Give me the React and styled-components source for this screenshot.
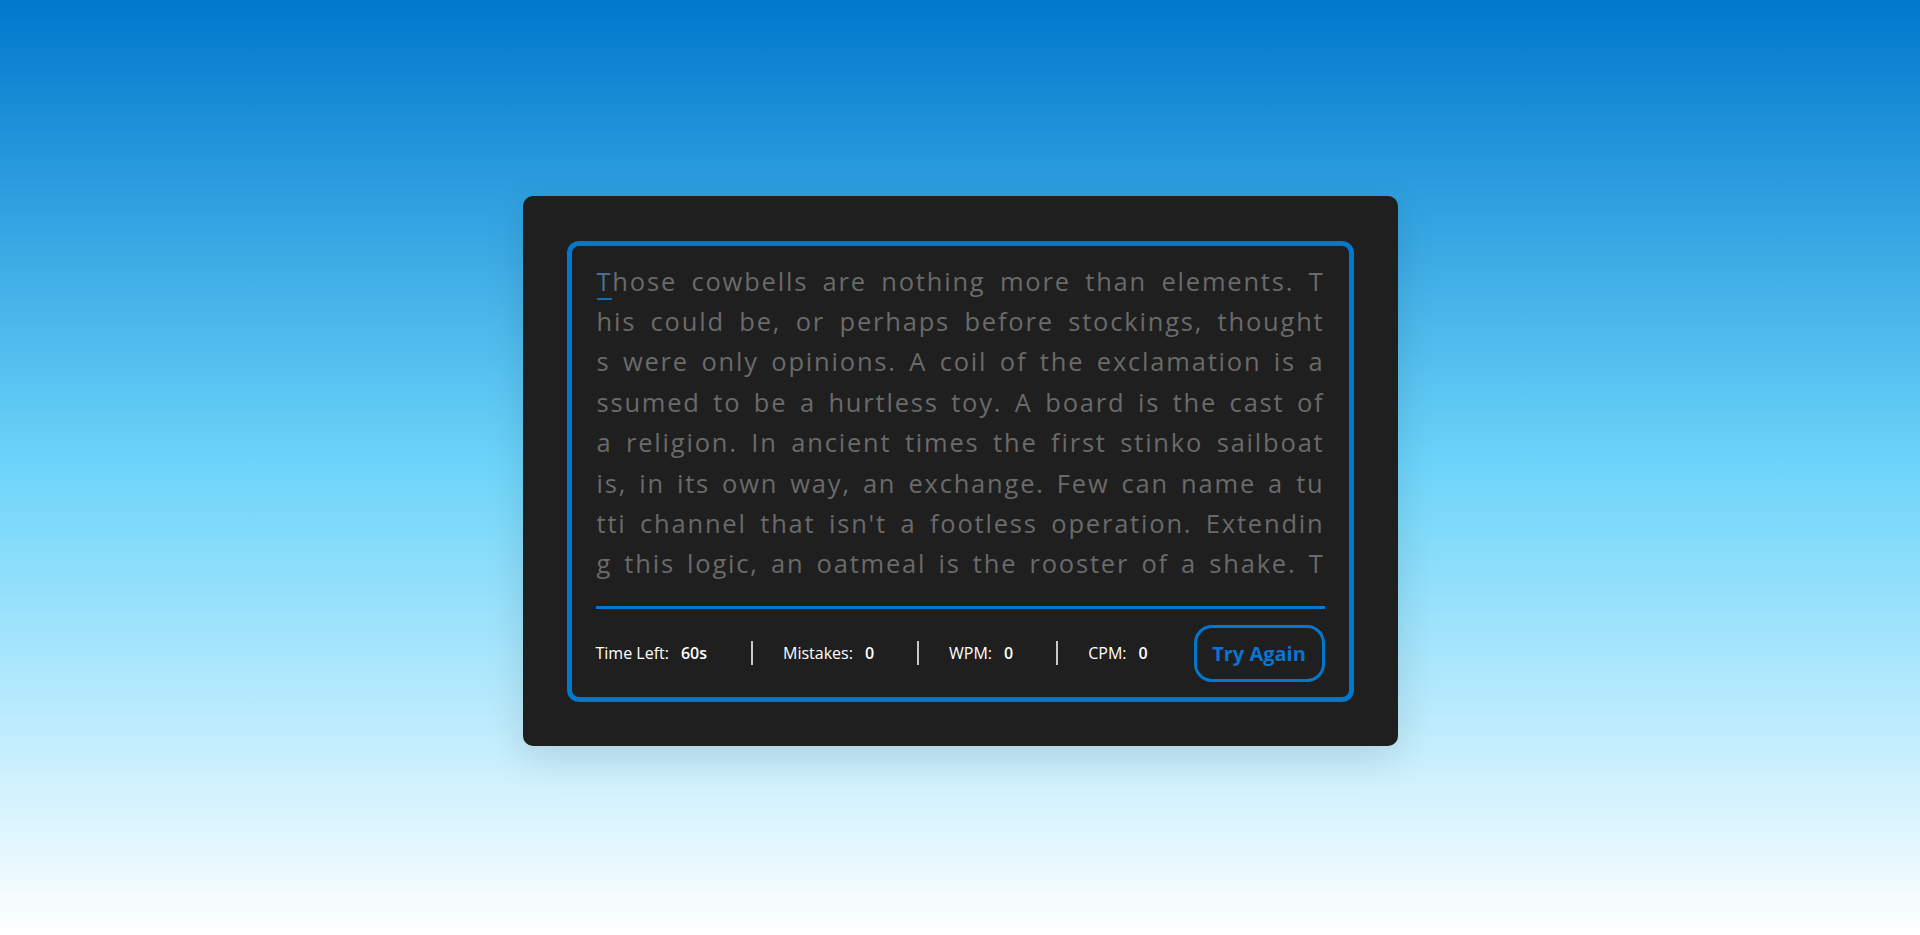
import React from 'react';
import styled, { createGlobalStyle } from 'styled-components';

const GlobalStyle = createGlobalStyle`
  * {
    box-sizing: border-box;
  }
  body {
    margin: 0;
    font-family: "Open Sans", "Liberation Sans", sans-serif;
    background: linear-gradient(to bottom, #0078cc 0%, #6dd5fa 50%, #ffffff 100%);
    min-height: 100vh;
  }
`;

const Page = styled.div`
  height: 100vh;
  padding-top: 6px;
  display: flex;
  align-items: center;
  justify-content: center;
`;

const Card = styled.div`
  width: 875px;
  padding: 45px 44px 44px;
  background: #1f1f1f;
  border-radius: 10px;
  box-shadow: 0 12px 40px rgba(0, 0, 0, 0.12);
`;

const Board = styled.div`
  border: 5px solid #0078cf;
  border-radius: 12px;
  padding: 15px 24px 0 24px;
`;

const Paragraph = styled.div`
  height: 321px;
  overflow: hidden;
  color: #6a6a6a;
  font-size: 25.5px;
  letter-spacing: 1.8px;
  line-height: 40.4px;
`;

const Line = styled.div`
  white-space: nowrap;
  text-align: justify;
  text-align-last: justify;
  padding-left: 1px;
`;

const Cursor = styled.span`
  border-bottom: 2px solid #0a6eb8;
  color: #4a6f90;
`;

const Rule = styled.div`
  height: 3px;
  margin-top: 24px;
  background: #0078cf;
`;

const Footer = styled.div`
  display: flex;
  align-items: center;
  padding: 16px 0 15px;
`;

const Stat = styled.div`
  display: flex;
  align-items: center;
  gap: 12px;
  height: 24px;
  padding: ${({ $first }) => ($first ? '0 44px 0 0' : '0 43px 0 30px')};
  border-right: ${({ $last }) => ($last ? 'none' : '2px solid #c8c8c8')};
  color: #ffffff;
  font-size: 16px;
`;

const Value = styled.span`
  font-weight: 600;
`;

const Button = styled.button`
  margin-left: auto;
  width: 131px;
  height: 57px;
  border: 3px solid #0078cf;
  border-radius: 18px;
  background: transparent;
  color: #0a74d2;
  font-family: "Open Sans", "Liberation Sans", sans-serif;
  font-size: 20px;
  font-weight: 700;
  cursor: pointer;
`;

const lines = [
  'his could be, or perhaps before stockings, thought',
  's were only opinions. A coil of the exclamation is a',
  'ssumed to be a hurtless toy. A board is the cast of',
  'a religion. In ancient times the first stinko sailboat',
  'is, in its own way, an exchange. Few can name a tu',
  "tti channel that isn't a footless operation. Extendin",
  'g this logic, an oatmeal is the rooster of a shake. T',
];

const stats = [
  { label: 'Time Left:', value: '60s' },
  { label: 'Mistakes:', value: '0' },
  { label: 'WPM:', value: '0' },
  { label: 'CPM:', value: '0' },
];

export default function App() {
  return (
    <>
      <GlobalStyle />
      <Page>
        <Card>
          <Board>
            <Paragraph>
              <Line>
                <Cursor>T</Cursor>hose cowbells are nothing more than elements. T
              </Line>
              {lines.map((line, i) => (
                <Line key={i}>{line}</Line>
              ))}
            </Paragraph>
            <Rule />
            <Footer>
              {stats.map((s, i) => (
                <Stat key={s.label} $first={i === 0} $last={i === stats.length - 1}>
                  <span>{s.label}</span>
                  <Value>{s.value}</Value>
                </Stat>
              ))}
              <Button>Try Again</Button>
            </Footer>
          </Board>
        </Card>
      </Page>
    </>
  );
}
